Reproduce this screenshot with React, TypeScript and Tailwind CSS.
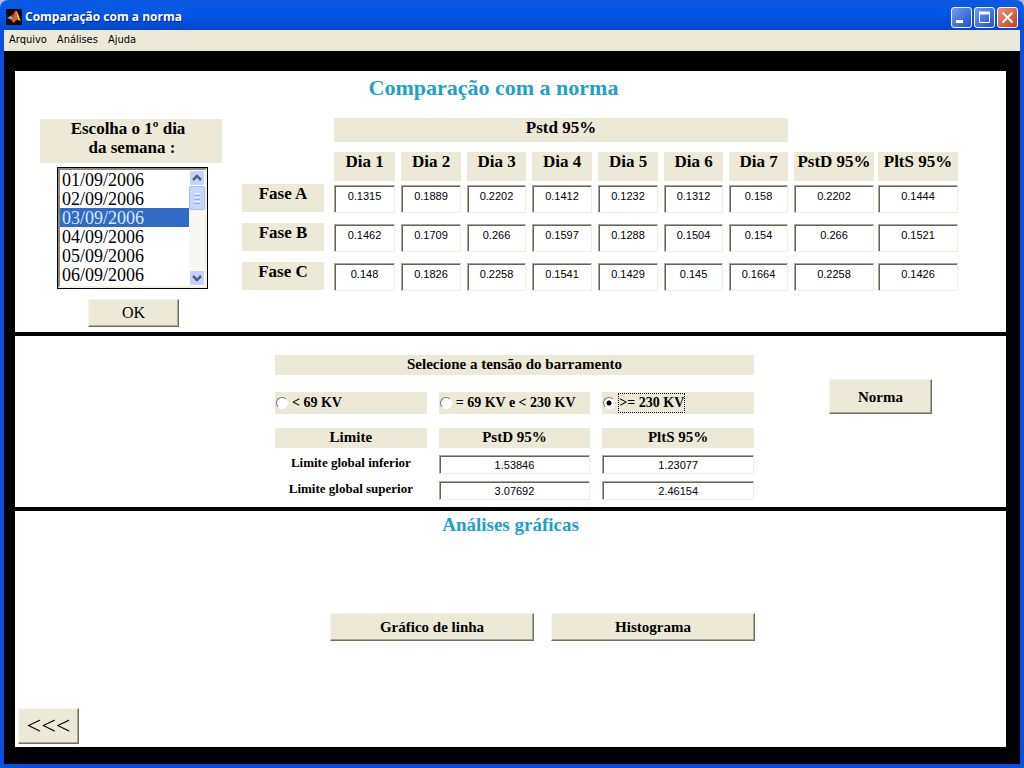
import { useState } from 'react';
import type { ReactNode } from 'react';
import clsx from 'clsx';

const DAYS = ['Dia 1', 'Dia 2', 'Dia 3', 'Dia 4', 'Dia 5', 'Dia 6', 'Dia 7'];

const PHASES = [
  { name: 'Fase A', values: ['0.1315', '0.1889', '0.2202', '0.1412', '0.1232', '0.1312', '0.158', '0.2202', '0.1444'] },
  { name: 'Fase B', values: ['0.1462', '0.1709', '0.266', '0.1597', '0.1288', '0.1504', '0.154', '0.266', '0.1521'] },
  { name: 'Fase C', values: ['0.148', '0.1826', '0.2258', '0.1541', '0.1429', '0.145', '0.1664', '0.2258', '0.1426'] },
];

const DATES = ['01/09/2006', '02/09/2006', '03/09/2006', '04/09/2006', '05/09/2006', '06/09/2006'];

const VOLTAGES = ['< 69 KV', '= 69 KV e < 230 KV', '>= 230 KV'];

const LIMITS = [
  { name: 'Limite global inferior', pstd: '1.53846', plts: '1.23077' },
  { name: 'Limite global superior', pstd: '3.07692', plts: '2.46154' },
];

function MatlabIcon() {
  return (
    <svg width="16" height="16" viewBox="0 0 16 16" aria-hidden="true">
      <rect width="16" height="16" fill="#0a0a14" />
      <path d="M1 9 L5 6.5 L7.5 8.5 L5.5 11 Z" fill="#7fa3b8" />
      <path d="M5 6.5 C7 6 8 3 9.5 1.5 L7.5 8.5 Z" fill="#b8421c" />
      <path d="M5.5 11 L7.5 8.5 L9.5 1.5 C10.5 3 11 8 12 11 C10 9.5 9 13 7.5 14 Z" fill="#e8641a" />
      <path d="M9.5 1.5 C12 2 13 9 15 12 C13 11 12.5 11.5 12 11 C11 8 10.5 4 9.5 1.5 Z" fill="#ffc13a" />
    </svg>
  );
}

interface CaptionButtonProps {
  label: string;
  close?: boolean;
  children: ReactNode;
}

function CaptionButton({ label, close, children }: CaptionButtonProps) {
  return (
    <button
      type="button"
      aria-label={label}
      className={clsx(
        'flex size-[21px] items-center justify-center rounded-[3px] border border-white',
        close ? 'bg-linear-to-br from-[#ec9478] to-[#c63a12]' : 'bg-linear-to-br from-[#6f9cf5] to-[#1f4fd0]',
      )}
    >
      <svg width="19" height="19" viewBox="0 0 19 19" fill="none" stroke="#fff" aria-hidden="true">
        {children}
      </svg>
    </button>
  );
}

function TitleBar() {
  return (
    <header className="flex h-[30px] items-center rounded-t-lg bg-linear-to-b from-[#0a5be0] via-[#0255e8] to-[#0348cf] pt-1 pr-1.5 pl-1.5">
      <MatlabIcon />
      <h1 className="ml-[3px] flex-1 font-['Open_Sans',sans-serif] text-[12px] leading-5 font-bold text-white [text-shadow:1px_1px_0_#0a2a80]">
        Comparação com a norma
      </h1>
      <div className="flex gap-0.5">
        <CaptionButton label="Minimizar">
          <path d="M4 13.5h7" strokeWidth="3" />
        </CaptionButton>
        <CaptionButton label="Maximizar">
          <path d="M4.5 4v10.5h10V4" />
          <path d="M4 5h11" strokeWidth="3" />
        </CaptionButton>
        <CaptionButton label="Fechar" close>
          <path d="M4.5 4.5l10 10M14.5 4.5l-10 10" strokeWidth="2" />
        </CaptionButton>
      </div>
    </header>
  );
}

function MenuBar() {
  return (
    <nav className="flex h-[21px] items-center gap-2.5 bg-[#ece9d8] pb-0.5 pl-[5px] font-['DejaVu_Sans_Condensed','DejaVu_Sans',sans-serif] text-[11px] leading-4 text-black">
      <button type="button">Arquivo</button>
      <button type="button">Análises</button>
      <button type="button">Ajuda</button>
    </nav>
  );
}

interface PushButtonProps {
  className: string;
  children: ReactNode;
}

function PushButton({ className, children }: PushButtonProps) {
  return (
    <button
      type="button"
      className={clsx(
        'border border-t-[#f6f4ec] border-r-[#716f64] border-b-[#716f64] border-l-[#f6f4ec] bg-[#ece9d8] text-black shadow-[inset_-1px_-1px_0_#aca899]',
        className,
      )}
    >
      {children}
    </button>
  );
}

interface FieldProps {
  label: string;
  value: string;
  className: string;
}

function Field({ label, value, className }: FieldProps) {
  return (
    <input
      type="text"
      readOnly
      aria-label={label}
      value={value}
      className={clsx(
        "block w-full rounded-none border border-t-[#aca899] border-r-[#efede4] border-b-[#efede4] border-l-[#aca899] bg-white pt-px text-center font-['Liberation_Sans',sans-serif] text-[11px] leading-4 font-normal text-black shadow-[inset_1px_1px_0_#66645a] outline-none",
        className,
      )}
    />
  );
}

function ScrollBar() {
  return (
    <div className="flex w-4 flex-col bg-[#f7f7f3]" aria-hidden="true">
      <div className="flex h-4 items-center justify-center rounded-xs border border-white bg-[#c3d3fd]">
        <svg width="10" height="8" viewBox="0 0 10 8" fill="none" stroke="#4d6185" strokeWidth="2.5">
          <path d="M1 6l4-4 4 4" />
        </svg>
      </div>
      <div className="flex h-6 flex-col items-center justify-center gap-px rounded-xs border border-[#a9bdf0] bg-[#c8d6fb]">
        <span className="h-px w-1.5 bg-[#eef4fe]" />
        <span className="h-px w-1.5 bg-[#8cb0f8]" />
        <span className="h-px w-1.5 bg-[#eef4fe]" />
        <span className="h-px w-1.5 bg-[#8cb0f8]" />
        <span className="h-px w-1.5 bg-[#eef4fe]" />
        <span className="h-px w-1.5 bg-[#8cb0f8]" />
      </div>
      <div className="flex-1" />
      <div className="flex h-4 items-center justify-center rounded-xs border border-white bg-[#c3d3fd]">
        <svg width="10" height="8" viewBox="0 0 10 8" fill="none" stroke="#4d6185" strokeWidth="2.5">
          <path d="M1 2l4 4 4-4" />
        </svg>
      </div>
    </div>
  );
}

function DayPicker() {
  const [day, setDay] = useState('03/09/2006');

  return (
    <div className="flex w-[182px] shrink-0 flex-col pt-px">
      <label htmlFor="day" className="h-11 bg-[#ece9d8] pr-1.5 text-center text-[17px] leading-[19px] font-bold">
        Escolha o 1º dia
        <br />
        <span className="pl-2">da semana :</span>
      </label>
      <div className="mt-1 ml-[17px] flex h-[122px] w-[151px] border border-black">
        <div className="flex flex-1 border-2 border-t-[#8a887c] border-r-[#f1efe2] border-b-[#f1efe2] border-l-[#8a887c]">
          <select
            id="day"
            size={6}
            value={day}
            onChange={(e) => setDay(e.target.value)}
            className="h-[116px] flex-1 overflow-hidden rounded-none bg-white text-[18px] text-black outline-none [scrollbar-width:none]"
          >
            {DATES.map((date) => (
              <option
                key={date}
                className="h-[19px] min-h-0 px-0.5 py-0 leading-[19px] checked:bg-linear-to-r checked:from-[#316ac5] checked:to-[#316ac5] checked:[-webkit-text-fill-color:#d8ecff]"
              >
                {date}
              </option>
            ))}
          </select>
          <ScrollBar />
        </div>
      </div>
      <PushButton className="mt-2.5 ml-12 h-7 w-[91px] text-[16px] leading-5">OK</PushButton>
    </div>
  );
}

function PhaseTable() {
  return (
    <table className="table-fixed border-collapse self-start text-[17px] leading-5">
      <colgroup>
        <col className="w-[92px]" />
        <col className="w-[67px]" />
        <col className="w-[66px]" />
        <col className="w-[65px]" />
        <col className="w-[66px]" />
        <col className="w-[66px]" />
        <col className="w-[65px]" />
        <col className="w-[65px]" />
        <col className="w-[84px]" />
        <col className="w-[84px]" />
      </colgroup>
      <thead>
        <tr className="h-[34px] align-top">
          <td />
          <th colSpan={7} className="pr-1.5">
            <div className="h-6 bg-[#ece9d8]">Pstd 95%</div>
          </th>
        </tr>
        <tr className="h-8 align-top">
          <td />
          {DAYS.map((day) => (
            <th key={day} className="pr-1.5">
              <div className="h-[29px] bg-[#ece9d8]">{day}</div>
            </th>
          ))}
          <th className="pr-1">
            <div className="h-[29px] bg-[#ece9d8] whitespace-nowrap">PstD 95%</div>
          </th>
          <th className="pr-1">
            <div className="h-[29px] bg-[#ece9d8] whitespace-nowrap">PltS 95%</div>
          </th>
        </tr>
      </thead>
      <tbody>
        {PHASES.map((phase) => (
          <tr key={phase.name} className="h-[39px] align-top last:h-7">
            <th className="pr-2.5">
              <div className="h-7 bg-[#ece9d8]">{phase.name}</div>
            </th>
            {phase.values.map((value, i) => (
              <td key={i} className={i < 7 ? 'pt-px pr-1.5' : 'pt-px pr-1'}>
                <Field label={`${phase.name}, valor ${i + 1}`} value={value} className="h-7 pb-2" />
              </td>
            ))}
          </tr>
        ))}
      </tbody>
    </table>
  );
}

function VoltageForm() {
  const [voltage, setVoltage] = useState('>= 230 KV');

  return (
    <div className="w-[479px]">
      <h2 className="h-5 bg-[#ece9d8] text-center text-[15px] leading-[18px] font-bold">
        Selecione a tensão do barramento
      </h2>
      <div className="mt-[17px] grid grid-cols-3 gap-x-3">
        {VOLTAGES.map((option) => (
          <label
            key={option}
            className="flex h-[22px] items-center gap-[3px] bg-[#ece9d8] pl-px text-[14px] leading-[18px] font-bold whitespace-nowrap"
          >
            <input
              type="radio"
              name="voltage"
              value={option}
              checked={voltage === option}
              onChange={() => setVoltage(option)}
              className="size-3 appearance-none rounded-full border border-t-[#77756c] border-r-white border-b-white border-l-[#77756c] bg-white checked:bg-radial checked:from-black checked:from-30% checked:to-white checked:to-40%"
            />
            <span className={clsx('border border-dotted', voltage === option ? 'border-black' : 'border-transparent')}>
              {option}
            </span>
          </label>
        ))}
      </div>
      <table className="mt-3.5 w-full table-fixed border-collapse text-[15px] leading-[18px]">
        <thead>
          <tr className="h-[27px] align-top">
            <th className="pr-2">
              <div className="h-5 bg-[#ece9d8]">Limite</div>
            </th>
            <th className="px-1">
              <div className="h-5 bg-[#ece9d8]">PstD 95%</div>
            </th>
            <th className="pl-2">
              <div className="h-5 bg-[#ece9d8]">PltS 95%</div>
            </th>
          </tr>
        </thead>
        <tbody>
          {LIMITS.map((limit) => (
            <tr key={limit.name} className="h-[26px] align-top last:h-[19px]">
              <th className="pr-2 text-[13px] leading-4 whitespace-nowrap">{limit.name}</th>
              <td className="px-1">
                <Field label={`${limit.name}, PstD 95%`} value={limit.pstd} className="h-[19px]" />
              </td>
              <td className="pl-2">
                <Field label={`${limit.name}, PltS 95%`} value={limit.plts} className="h-[19px]" />
              </td>
            </tr>
          ))}
        </tbody>
      </table>
    </div>
  );
}

export default function App() {
  return (
    <div className="flex min-h-screen flex-col bg-[#b9b4e0] font-['Liberation_Serif',serif] text-black">
      <TitleBar />
      <div className="flex flex-1 flex-col border-x-4 border-b-4 border-[#0a4fe0] bg-black">
        <MenuBar />
        <main className="mt-5 mr-3.5 mb-[17px] ml-[11px] flex flex-1 flex-col divide-y-4 divide-black bg-white">
          <section className="pt-[3px] pb-[5px]">
            <h2 className="pr-[34px] text-center text-[22px] leading-7 font-bold text-[#21a0c8]">
              Comparação com a norma
            </h2>
            <div className="mt-4 flex gap-5 pl-[25px]">
              <DayPicker />
              <PhaseTable />
            </div>
          </section>
          <section className="flex items-start gap-[75px] pt-[19px] pb-[7px] pl-[260px]">
            <VoltageForm />
            <PushButton className="mt-6 h-[35px] w-[103px] text-[15px] leading-5 font-bold">Norma</PushButton>
          </section>
          <section className="flex flex-1 flex-col">
            <h2 className="text-center text-[19px] leading-7 font-bold text-[#21a0c8]">Análises gráficas</h2>
            <div className="mt-[74px] flex justify-center gap-[17px] pl-16">
              <PushButton className="h-7 w-[204px] text-[15px] leading-5 font-bold">Gráfico de linha</PushButton>
              <PushButton className="h-7 w-[204px] text-[15px] leading-5 font-bold">Histograma</PushButton>
            </div>
            <PushButton className="mt-auto mb-[3px] ml-[3px] h-9 w-[61px] text-[26px] leading-7">&lt;&lt;&lt;</PushButton>
          </section>
        </main>
      </div>
    </div>
  );
}
